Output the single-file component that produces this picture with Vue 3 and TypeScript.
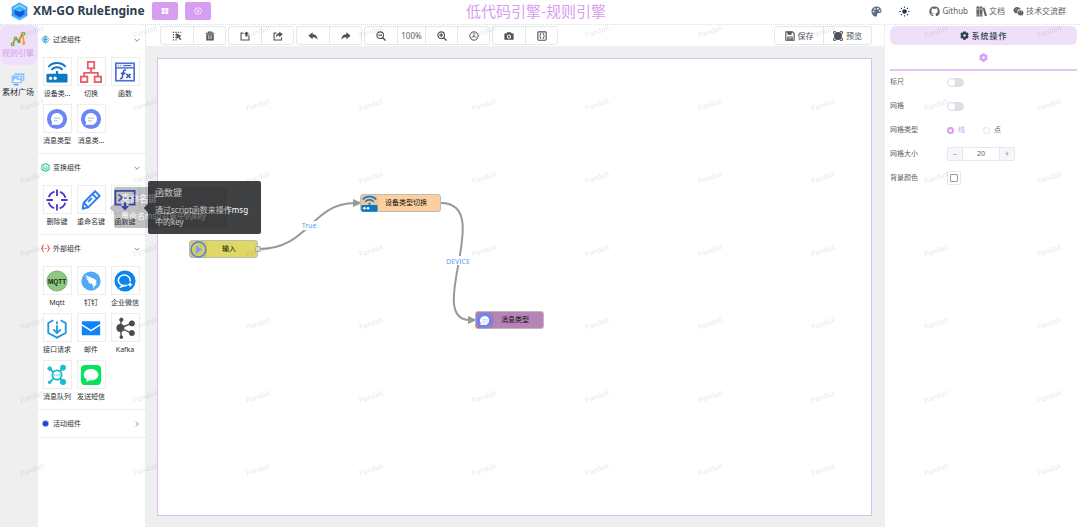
<script setup lang="ts">
import { ref } from 'vue'

interface Tile { label: string; icon: string }
interface Group { title: string; icon: string; open: boolean; tiles: Tile[] }
interface FlowNode { id: string; label: string; icon: string }

const chat = '<circle cx="12" cy="12" r="11" fill="#6a87f5"/><path d="M12 5.500a6.500 6.500 0 1 1-1 12.900H5.800l1-2.600A6.500 6.500 0 0 1 12 5.500z" fill="#fff"/><path d="M8.500 11h7M8.500 14h4.500" stroke="#b9c7fb" stroke-width="1.300"/>'
const router = '<rect x="0.500" y="14" width="23" height="9.500" rx="1.500" fill="#0d78c4"/><path d="M12 11v4" stroke="#0d78c4" stroke-width="2.400"/><g fill="none" stroke="#0d78c4" stroke-width="2"><path d="M2.500 6.500C7 .8 17 .8 21.500 6.500"/><path d="M6 9.800c3-4 9-4 12 0"/></g><circle cx="5" cy="18.800" r="1.800" fill="#fff"/><circle cx="10" cy="18.800" r="1.800" fill="#fff"/>'

const icons: Record<string, string> = {
  logo: '<path d="M12 .5l10 5.700v11.600L12 23.500 2 17.800V6.200z" fill="#3d9dfb"/><path d="M12 2.500l8 4.700v3L12 6 4 10.200v-3z" fill="#7fd4ff"/><path d="M12 7l6 3v5.500L12 19l-6-3.500V10z" fill="#1a56d6"/><path d="M12 7l6 3-6 2.700L6 10z" fill="#2ac6f5"/><path d="M1 11v2.500M23 11v2.500" stroke="#fff" stroke-width="2.500"/><path d="M4 17l8 4 8-4v1.500l-8 4.500-8-4.500z" fill="#5cc9ff"/>',
  grid: '<path d="M2 3h9v8H2zM13 3h9v8h-9zM2 13h9v8H2zM13 13h9v8h-9z" fill="currentColor"/>',
  hexcog: '<path d="M12 1.500l3 2.500 4.500-.2 1 4.400L23.500 12l-3 3.800-1 4.400L15 20l-3 2.500L9 20l-4.500.2-1-4.400L.5 12l3-3.800 1-4.400L9 4z" fill="none" stroke="currentColor" stroke-width="2"/><circle cx="12" cy="12" r="3.500" fill="none" stroke="currentColor" stroke-width="2"/>',
  cog: '<path fill-rule="evenodd" d="M8.500 1h7l.8 3 1.500.900 3.200-.9 2 5.500-2 1.500v2l2 1.500-2 5.500-3.200-.9-1.500.9-.8 3h-7l-.8-3-1.500-.9-3.200.9-2-5.500 2-1.500v-2L1 9.500 3 4l3.200.9L7.700 4zM12 8.500a3.500 3.500 0 1 0 0 7 3.500 3.500 0 0 0 0-7z" fill="currentColor"/>',
  palette: '<path fill-rule="evenodd" d="M12 1C6 1 1 5.700 1 12c0 6 4.500 11 9.800 11 4.400 0 1.200-4.500 3.200-6.500 2-2 9 1 9-5.500C23 5 18 1 12 1zM5.500 10a1.900 1.900 0 1 1 .1 3.900 1.900 1.900 0 0 1 0-3.900zM8.500 4.800a1.900 1.900 0 1 1 0 3.900 1.900 1.900 0 0 1 0-3.900zM15 4a1.900 1.900 0 1 1 0 3.900A1.900 1.900 0 0 1 15 4zM19 8.500a1.900 1.900 0 1 1 0 3.900 1.900 1.900 0 0 1 0-3.900z" fill="currentColor"/>',
  sun: '<circle cx="12" cy="12" r="5" fill="currentColor"/><path d="M12 1v3M12 20v3M1 12h3M20 12h3M4.200 4.200l2.200 2.200M17.600 17.600l2.200 2.200M4.200 19.800l2.200-2.200M17.600 6.400l2.200-2.200" stroke="currentColor" stroke-width="2.500"/>',
  github: '<path d="M12 1a11 11 0 0 0-3.500 21.500c.6.100.8-.3.800-.6v-2.300c-3.100.7-3.700-1.300-3.700-1.300-.5-1.300-1.200-1.600-1.200-1.600-1-.7.100-.7.100-.7 1.100.100 1.700 1.100 1.700 1.100 1 1.700 2.600 1.200 3.200.9.100-.7.400-1.200.7-1.500-2.500-.3-5-1.200-5-5.400 0-1.200.4-2.200 1.100-3-.1-.3-.5-1.400.1-3 0 0 .9-.3 3 1.100a10.500 10.500 0 0 1 5.500 0c2.100-1.400 3-1.100 3-1.100.6 1.600.2 2.700.1 3 .7.800 1.100 1.800 1.100 3 0 4.200-2.600 5.100-5 5.400.4.300.8 1 .8 2v3.400c0 .3.200.7.800.6A11 11 0 0 0 12 1z" fill="currentColor"/>',
  books: '<path fill-rule="evenodd" d="M1 1h6v22H1zM3 5v3h2V5zM3 18v2h2v-2zM8 1h6v22H8zM10 5v3h2V5zM10 18v2h2v-2zM14.500 4.500l4-1.500 5.500 18-4.500 1.500z" fill="currentColor"/>',
  wechat: '<path d="M9 2C4.500 2 1 5 1 8.800c0 2.200 1.100 4 3 5.200l-.8 2.500L6 15c1 .3 2 .5 3 .5-1-5 3-8.500 8-8.300C16.200 4.200 13 2 9 2z" fill="currentColor"/><path d="M16.500 9c-3.900 0-7 2.600-7 5.800s3.100 5.700 7 5.700c.8 0 1.600-.1 2.300-.3l2.400 1.300-.7-2.200c1.600-1 2.500-2.700 2.500-4.500C23 11.600 20.400 9 16.500 9z" fill="currentColor"/><path d="M6 7h1.500M11 7h1.500M13.500 13H15M18 13h1.500" stroke="#fff" stroke-width="1.600"/>',
  route: '<path d="M4 20l4-9 5 4 6-11" fill="none" stroke="#e8a13c" stroke-width="3"/><path d="M4 20l4-9 5 4 6-11" fill="none" stroke="#d9534a" stroke-width="1"/><g fill="#5fae58"><circle cx="4" cy="20" r="3"/><circle cx="8.500" cy="11" r="2.800"/><circle cx="13.500" cy="15.500" r="2.800"/><circle cx="20" cy="4" r="3"/></g><path d="M19 5l2 13" stroke="#e8a13c" stroke-width="2.500"/><circle cx="20.500" cy="18.500" r="2.500" fill="#e8a13c"/><g fill="#f9e26b"><circle cx="4" cy="20" r="1.200"/><circle cx="20" cy="4" r="1.200"/><circle cx="8.500" cy="11" r="1"/></g>',
  gallery: '<path d="M6 2h17v14h-3V5H6z" fill="#8fc6fb"/><path d="M1 6h18v13H1z" fill="#8fc6fb"/><path d="M3 17l5-6 4 4 2-2 3 4z" fill="#fff"/><circle cx="14.500" cy="9.500" r="1.600" fill="#fff"/><path d="M3 20l3 3h8l-2-3z" fill="#5ea6ee"/>',
  filter: '<path d="M9 3L2 12l7 9z" fill="none" stroke="#3b8ff0" stroke-width="2.200"/><path d="M12 1v22" stroke="#3b8ff0" stroke-width="1.800"/><path d="M15 3l7 9-7 9z" fill="none" stroke="#49cda0" stroke-width="2.200"/><path d="M6 12h12" stroke="#3b8ff0" stroke-width="2.200"/>',
  transform: '<path d="M12 1.500l9.500 5v11l-9.500 5-9.500-5v-11z" fill="none" stroke="#27c99a" stroke-width="2.800"/><path d="M8 7v10M8 14h3v3M13 10h3v7h-3" fill="none" stroke="#27c99a" stroke-width="2.200"/>',
  braces: '<path d="M7 3C3.500 3 5.500 10 1.500 12c4 2 2 9 5.500 9M17 3c3.500 0 1.500 7 5.500 9-4 2-2 9-5.500 9" fill="none" stroke="#f0524f" stroke-width="2.700"/><path d="M7.500 12h2M11 12h2M14.500 12h2" stroke="#f0524f" stroke-width="2.500"/>',
  activity: '<circle cx="12" cy="12" r="9.500" fill="#a9bdf5"/><circle cx="12" cy="12" r="7" fill="#2141cf"/>',
  router,
  chat,
  tree: '<g fill="none" stroke="#e8606a" stroke-width="2"><rect x="8.500" y="1" width="7" height="7"/><rect x="1" y="17" width="7" height="6"/><rect x="16" y="17" width="7" height="6"/><path d="M12 8v5M4.500 17v-4h15v4"/></g>',
  fx: '<rect x="2" y="2.500" width="20" height="19" fill="none" stroke="#4a6fd8" stroke-width="1.800"/><path d="M2 7.500h20" stroke="#4a6fd8" stroke-width="1.600"/><path d="M4.500 5h1M7 5h1M10 5h9" stroke="#4a6fd8" stroke-width="1.500"/><path d="M13 10c-2.500-.6-2.700 1-3 3l-.8 4c-.3 1.800-1 2.500-2.700 2M7.500 13.500h5M13.500 14l4.500 4.500M18 14l-4.500 4.500" fill="none" stroke="#3455c8" stroke-width="1.700"/>',
  target: '<circle cx="12" cy="12" r="9.500" fill="none" stroke="#4b37c9" stroke-width="2" stroke-dasharray="8.920 6" stroke-dashoffset="-3"/><path d="M12 .5v7M12 16.500v7M.5 12h7M16.500 12h7" stroke="#4b37c9" stroke-width="2"/>',
  pencil: '<g fill="none" stroke="#2f7df0" stroke-width="2.100" stroke-linejoin="round"><path d="M16.500 2.500l5 5L9 20l-6 1.500L4 15z"/><path d="M13.500 5.500l5 5M4 15l5 5M9 14l4-4"/></g>',
  script: '<path d="M8 17H1.500V2h21v15H16" fill="none" stroke="#3d52d5" stroke-width="2"/><path d="M5 6l4 3.500L5 13M11 10h3M16 10h3" fill="none" stroke="#3d52d5" stroke-width="1.800"/><path d="M12 14v6" stroke="#3d52d5" stroke-width="2.500"/><path d="M7.500 18.500h9L12 23.500z" fill="#3d52d5"/>',
  mqtt: '<circle cx="12" cy="12" r="11" fill="#8cc97e" stroke="#6a9a60" stroke-width=".8"/><text x="12" y="15" text-anchor="middle" font-family="Liberation Sans, sans-serif" font-weight="700" font-size="7" fill="#1b2b1a">MQTT</text>',
  ding: '<circle cx="12" cy="12" r="10.500" fill="#52a8f7"/><path d="M6 5.500c3 2 8 3 11.500 5.500 1 .8.300 2-.7 3.500h2l-5 6 1-4h-2l.8-1.800c-2.800.3-4.600-.7-5-2.200l2 .2C8 11.500 7 10 6.800 8.500l3 1.500C7.500 8.500 6.200 7 6 5.500z" fill="#fff"/>',
  wecom: '<circle cx="12" cy="12" r="11.500" fill="#0a84ee"/><path d="M17.500 12.500a6.500 5.700 0 1 0-8.500 4l-1.500 2 4-1.500c1 .1 2 0 3-.4" fill="none" stroke="#fff" stroke-width="1.700"/><path d="M17.500 13l1 2 2 1-2 1-1 2-1-2-2-1 2-1z" fill="#fff"/>',
  api: '<path d="M8 3.500L2.500 6.500v11L12 22.500l9.500-5v-11L16 3.500" fill="none" stroke="#2496dc" stroke-width="2"/><path d="M12 5v3M12 9v8M8 13.500l4 4 4-4" fill="none" stroke="#2496dc" stroke-width="2"/>',
  mail: '<path d="M2 4.500h20v3L12 14 2 7.500z" fill="#0d84fb"/><path d="M2 9.500l10 6.300 10-6.300v10.500H2z" fill="#0d84fb"/>',
  kafka: '<g fill="#4b4b4d" stroke="#4b4b4d"><path d="M7 12L8 3M7 12l1 10M7 12l12-5M7 12l12 5.500" stroke-width="1.500"/><circle cx="7" cy="12" r="4"/><circle cx="8" cy="3" r="1.900"/><circle cx="8" cy="22" r="1.500"/><circle cx="19.500" cy="7" r="2.800"/><circle cx="19.500" cy="17.500" r="2.800"/></g>',
  queue: '<g fill="#1cbcd2" stroke="#1cbcd2"><path d="M4 5l4 4M18 4l-3 5M4 20l4-4M15 15l3 4" stroke-width="2"/><circle cx="12" cy="12" r="5" fill="#fff" stroke-width="2"/><circle cx="4" cy="5" r="2"/><circle cx="18.500" cy="4" r="2.800"/><circle cx="4" cy="20" r="1.500"/><circle cx="18.500" cy="19.500" r="3"/><path d="M9 12h1M11.500 12h1M14 12h1" stroke-width="1.500"/></g>',
  sms: '<rect x="1" y="1" width="22" height="22" rx="4.500" fill="#06e25b"/><path d="M12 5.500c-4.400 0-8 2.700-8 6.200 0 2.200 1.400 4 3.500 5.200L7 19.500l3.200-1.800c.6.100 1.200.2 1.800.2 4.400 0 8-2.700 8-6.200s-3.600-6.200-8-6.200z" fill="#fff"/>',
  play: '<circle cx="12" cy="12" r="10.500" fill="none" stroke="#4f7fe6" stroke-width="2"/><path d="M8.500 6v12l8.500-6z" fill="#7aa2ee"/>',
  select: '<path d="M2 3h3M8 3h3M14 3h3M20 3h2M2 9h3M2 15h3M2 21h3M8 21h3M8 9h3M8 15h3M20 20h2" stroke="currentColor" stroke-width="3"/><path d="M10 5l13 7-5 1.500 4 6-3 2-4-6-4 4z" fill="currentColor"/>',
  trash: '<path d="M1.500 5.500h21M8 5V2.500h8V5" fill="none" stroke="currentColor" stroke-width="2.500"/><path fill-rule="evenodd" d="M3 7.500h18V23H3zM7 10v10h1.500V10zM11.200 10v10h1.600V10zM15.500 10v10H17V10z" fill="currentColor"/>',
  importer: '<path d="M8 5H2.500v16.500h19V10" fill="none" stroke="currentColor" stroke-width="2.600"/><path d="M18 13h-5V8H9l6.500-7L22 8h-4z" fill="currentColor"/>',
  exporter: '<path d="M8 5H2.500v16.500h18V15" fill="none" stroke="currentColor" stroke-width="2.600"/><path d="M15 1l8.500 7L15 15v-4c-4 0-6 1-8.500 5 0-6 3.500-10 8.500-11z" fill="currentColor"/>',
  undo: '<path d="M11 3L1 11.500 11 20v-5c5 0 9 1 12 6 0-8-5-13-12-13z" fill="currentColor"/>',
  redo: '<path d="M13 3l10 8.500L13 20v-5c-5 0-9 1-12 6C1 13 6 8 13 8z" fill="currentColor"/>',
  zoomOut: '<circle cx="10" cy="10" r="8" fill="none" stroke="currentColor" stroke-width="2.600"/><path d="M5.500 10h9M15.500 15.500L23 23" stroke="currentColor" stroke-width="3.200"/>',
  zoomIn: '<circle cx="10" cy="10" r="8" fill="none" stroke="currentColor" stroke-width="2.600"/><path d="M5.500 10h9M10 5.500v9M15.500 15.500L23 23" stroke="currentColor" stroke-width="3"/>',
  reset: '<circle cx="12" cy="12" r="10" fill="none" stroke="currentColor" stroke-width="2.400"/><path d="M12 5v8M12 12.500l-6 3M12 12.500l6 3" stroke="currentColor" stroke-width="2"/>',
  camera: '<path fill-rule="evenodd" d="M7.500 3h9l1.500 3h5v15H1V6h5zM12 8.500a5 5 0 1 0 0 10 5 5 0 0 0 0-10zM12 11a2.500 2.500 0 1 1 0 5 2.500 2.500 0 0 1 0-5z" fill="currentColor"/>',
  code: '<rect x="2" y="2" width="20" height="20" rx="2" fill="none" stroke="currentColor" stroke-width="2.600"/><path d="M10.500 6.500H8v4L6 12l2 1.500v4h2.500M13.500 6.500H16v4l2 1.500-2 1.500v4h-2.500" fill="none" stroke="currentColor" stroke-width="2.200"/>',
  save: '<path d="M2 2h16l4 4v16H2z" fill="none" stroke="currentColor" stroke-width="2.600"/><path d="M6 2h10v7H6zM5.500 13h13v9h-13z" fill="currentColor"/><path d="M8 16h8M8 19h8" stroke="#fff" stroke-width="1.500"/>',
  preview: '<path d="M1.500 7V1.500H7M17 1.500h5.500V7M22.500 17v5.500H17M7 22.500H1.500V17" fill="none" stroke="currentColor" stroke-width="2.400"/><path d="M4 4h16v16H4z" fill="currentColor" opacity=".7"/><circle cx="12" cy="12" r="9.500" fill="currentColor"/>',
}

const groups = ref<Group[]>([
  { title: '过滤组件', icon: 'filter', open: true, tiles: [
    { label: '设备类型切换', icon: 'router' }, { label: '切换', icon: 'tree' }, { label: '函数', icon: 'fx' },
    { label: '消息类型', icon: 'chat' }, { label: '消息类型切换', icon: 'chat' },
  ] },
  { title: '变换组件', icon: 'transform', open: true, tiles: [
    { label: '删除键', icon: 'target' }, { label: '重命名键', icon: 'pencil' }, { label: '函数键', icon: 'script' },
  ] },
  { title: '外部组件', icon: 'braces', open: true, tiles: [
    { label: 'Mqtt', icon: 'mqtt' }, { label: '钉钉', icon: 'ding' }, { label: '企业微信', icon: 'wecom' },
    { label: '接口请求', icon: 'api' }, { label: '邮件', icon: 'mail' }, { label: 'Kafka', icon: 'kafka' },
    { label: '消息队列', icon: 'queue' }, { label: '发送短信', icon: 'sms' },
  ] },
  { title: '活动组件', icon: 'activity', open: false, tiles: [] },
])

const shorten = (s: string): string => (s.length > 5 ? s.slice(0, 3) + '...' : s)

const toolGroups = [
  [{ icon: 'select', name: '框选' }, { icon: 'trash', name: '删除' }],
  [{ icon: 'importer', name: '导入' }, { icon: 'exporter', name: '导出' }],
  [{ icon: 'undo', name: '撤销' }, { icon: 'redo', name: '重做' }],
  [{ icon: 'zoomOut', name: '缩小' }, { icon: '', name: '100%' }, { icon: 'zoomIn', name: '放大' }, { icon: 'reset', name: '还原' }],
  [{ icon: 'camera', name: '截图' }, { icon: 'code', name: '源码' }],
]

const nodes: FlowNode[] = [
  { id: 'start', label: '输入', icon: 'play' },
  { id: 'device', label: '设备类型切换', icon: 'router' },
  { id: 'message', label: '消息类型', icon: 'chat' },
]

const ruler = ref(false)
const gridOn = ref(false)
const gridType = ref('line')
const gridSize = ref(20)
const background = ref('#ffffff')
</script>

<template>
  <div class="app">
    <header class="top">
      <div class="brand">
        <svg class="logo" viewBox="0 0 24 24" v-html="icons.logo"></svg>
        <strong class="name">XM-GO RuleEngine</strong>
        <button class="chip" aria-label="菜单"><svg class="i8" viewBox="0 0 24 24" v-html="icons.grid"></svg></button>
        <button class="chip" aria-label="设置"><svg class="i8" viewBox="0 0 24 24" v-html="icons.hexcog"></svg></button>
      </div>
      <h1 class="title">低代码引擎-规则引擎</h1>
      <nav class="links">
        <button class="slate" aria-label="主题"><svg class="i11" viewBox="0 0 24 24" v-html="icons.palette"></svg></button>
        <button class="dark" aria-label="明暗"><svg class="i11" viewBox="0 0 24 24" v-html="icons.sun"></svg></button>
        <a href="#github"><svg class="i11" viewBox="0 0 24 24" v-html="icons.github"></svg>Github</a>
        <a href="#docs"><svg class="i11" viewBox="0 0 24 24" v-html="icons.books"></svg>文档</a>
        <a href="#group"><svg class="i11" viewBox="0 0 24 24" v-html="icons.wechat"></svg>技术交流群</a>
      </nav>
    </header>

    <div class="body">
      <nav class="rail">
        <a class="rail-item active" href="#rules"><svg class="i16" viewBox="0 0 24 24" v-html="icons.route"></svg>规则引擎</a>
        <a class="rail-item" href="#assets"><svg class="i14" viewBox="0 0 24 24" v-html="icons.gallery"></svg>素材广场</a>
      </nav>

      <aside class="palette">
        <section v-for="g in groups" :key="g.title" class="group">
          <button class="group-head" :aria-expanded="g.open" @click="g.open = !g.open">
            <svg class="i9" viewBox="0 0 24 24" v-html="icons[g.icon]"></svg>
            <span>{{ g.title }}</span>
            <svg class="chev" :class="{ closed: !g.open }" viewBox="0 0 12 12"><path d="M1 3.500l5 5 5-5" /></svg>
          </button>
          <div v-if="g.open && g.tiles.length" class="tiles">
            <div v-for="t in g.tiles" :key="t.label" class="tile">
              <div class="box"><svg class="i22" viewBox="0 0 24 24" v-html="icons[t.icon]"></svg></div>
              <span>{{ shorten(t.label) }}</span>
            </div>
          </div>
        </section>
      </aside>

      <main class="work">
        <div class="toolbar">
          <div v-for="(tg, i) in toolGroups" :key="i" class="bgroup">
            <button v-for="b in tg" :key="b.name" class="tool" :class="{ zoom: !b.icon }" :aria-label="b.name">
              <svg v-if="b.icon" class="i10" viewBox="0 0 24 24" v-html="icons[b.icon]"></svg>
              <template v-else>{{ b.name }}</template>
            </button>
          </div>
          <div class="bgroup end">
            <button class="tool wide"><svg class="i10" viewBox="0 0 24 24" v-html="icons.save"></svg>保存</button>
            <button class="tool wide"><svg class="i10" viewBox="0 0 24 24" v-html="icons.preview"></svg>预览</button>
          </div>
        </div>
        <div class="stage">
          <div class="canvas">
            <svg class="edges">
              <path class="edge" d="M101 190C151 190 153 144 197 144" />
              <path class="edge" d="M283 144C338 144 266 261 312 261" />
              <path class="arrow" d="M195 140l9 4-9 4zM310 257l9 4-9 4z" />
              <rect class="gap" x="143" y="162" width="18" height="9" />
              <rect class="gap" x="287" y="197" width="26" height="9" />
              <text x="151" y="169">True</text>
              <text x="300" y="205">DEVICE</text>
            </svg>
            <div v-for="n in nodes" :key="n.id" class="node" :class="n.id">
              <svg class="node-icon" viewBox="0 0 24 24" v-html="icons[n.icon]"></svg>
              <span>{{ n.label }}</span>
              <i v-if="n.id === 'start'" class="port"></i>
            </div>
          </div>
        </div>
      </main>

      <aside class="props">
        <h2 class="props-head"><svg class="i9" viewBox="0 0 24 24" v-html="icons.cog"></svg>系统操作</h2>
        <button class="tab" aria-label="画布设置"><svg class="i9" viewBox="0 0 24 24" v-html="icons.cog"></svg></button>
        <form class="form" @submit.prevent>
          <div class="row"><label for="ruler">标尺</label><input id="ruler" v-model="ruler" class="switch" type="checkbox" /></div>
          <div class="row"><label for="grid">网格</label><input id="grid" v-model="gridOn" class="switch" type="checkbox" /></div>
          <div class="row" role="radiogroup" aria-labelledby="gtype">
            <span id="gtype" class="cap">网格类型</span>
            <label class="radio"><input v-model="gridType" type="radio" value="line" /><span>线</span></label>
            <label class="radio"><input v-model="gridType" type="radio" value="dot" /><span>点</span></label>
          </div>
          <div class="row">
            <label for="size">网格大小</label>
            <div class="number">
              <button type="button" aria-label="减少" @click="gridSize--">−</button>
              <input id="size" v-model.number="gridSize" type="text" />
              <button type="button" aria-label="增加" @click="gridSize++">+</button>
            </div>
          </div>
          <div class="row"><label for="bg">背景颜色</label><input id="bg" v-model="background" class="color" type="color" /></div>
        </form>
      </aside>
    </div>

    <div class="tip main-tip" role="tooltip"><b>函数键</b><p>通过script函数来操作msg中的key</p></div>
    <div class="tip fading" role="tooltip"><b>重命名键</b><p>重命名msg对象中的key</p></div>

    <svg class="watermark" aria-hidden="true">
      <defs>
        <pattern id="wm" x="-24" y="-5" width="113" height="73" patternUnits="userSpaceOnUse">
          <text x="56" y="39" text-anchor="middle" transform="rotate(-18 56 36)">PandaX</text>
        </pattern>
      </defs>
      <rect width="100%" height="100%" fill="url(#wm)" />
    </svg>
  </div>
</template>

<style>
body { margin: 0; }
</style>

<style scoped>
.app {
  position: relative;
  display: flex;
  flex-direction: column;
  min-height: 100vh;
  overflow: hidden;
  background: #fff;
  color: #606266;
  font-family: "Noto Sans", "Noto Sans CJK SC", sans-serif;
  font-size: 8px;
  line-height: 12px;
}
.app *, .app *::before { box-sizing: border-box; }
button { font: inherit; color: inherit; padding: 0; margin: 0; border: 0; background: none; cursor: pointer; }
a { color: inherit; text-decoration: none; }
svg { display: block; flex: none; }
.i8 { width: 8px; height: 8px; }
.i9 { width: 9px; height: 9px; }
.i10 { width: 10px; height: 10px; }
.i11 { width: 11px; height: 11px; }
.i14 { width: 14px; height: 14px; }
.i16 { width: 16px; height: 16px; }
.i22 { width: 22px; height: 22px; }

.top {
  display: grid;
  grid-template-columns: 1fr auto 1fr;
  align-items: center;
  height: 25px;
  padding: 0 14px 2px 6px;
  border-bottom: 1px dotted #dcdfe6;
}
.brand { display: flex; align-items: center; padding-left: 4px; }
.logo { width: 19px; height: 19px; margin-right: 4px; }
.name { width: 119px; color: #2c3e50; font-size: 12px; line-height: 18px; white-space: nowrap; }
.chip { display: flex; align-items: center; justify-content: center; width: 26px; height: 18px; margin-right: 7px; border-radius: 2px; background: #d69df0; color: #fff; }
.title { margin: 0; color: #d69df0; font-size: 15px; font-weight: 400; line-height: 22px; }
.links { display: flex; align-items: center; justify-content: flex-end; gap: 8px; }
.links a { display: flex; align-items: center; gap: 2px; }
.links .slate { margin-right: 9px; color: #5d6d85; }
.links .dark { margin-right: 11px; color: #22344a; }

.body { display: flex; flex: 1; }
.rail { width: 38px; background: #efefef; }
.rail-item { display: flex; flex-direction: column; align-items: center; justify-content: center; height: 40px; padding-right: 2px; color: #303133; white-space: nowrap; }
.rail-item.active { border-radius: 8px; background: #f0dff9; color: #d69df0; }

.palette { width: 108px; padding-top: 1px; border-right: 1px dotted #dcdfe6; font-size: 7px; }
.group { border-bottom: 1px solid #ebeef5; }
.group-head { display: flex; align-items: center; gap: 3px; width: 100%; height: 27px; padding: 0 5px 0 3px; color: #303133; text-align: left; }
.group-head span { flex: 1; }
.chev { width: 6px; height: 6px; fill: none; stroke: #606266; stroke-width: 1.5; }
.chev.closed { transform: rotate(-90deg); }
.tiles { display: grid; grid-template-columns: repeat(3, 34px); padding: 4px 0 2px 2px; }
.tile { display: flex; flex-direction: column; align-items: center; height: 47px; color: #303133; white-space: nowrap; }
.box { display: flex; align-items: center; justify-content: center; width: 29px; height: 29px; margin-bottom: 2px; border: 1px solid #ededed; }

.work { display: flex; flex: 1; flex-direction: column; min-width: 0; }
.toolbar { display: flex; align-items: center; gap: 2px; height: 21px; padding: 0 12px 0 14px; }
.bgroup { display: flex; height: 19px; border: 1px solid #e4e7ed; border-radius: 3px; }
.bgroup.end { margin-left: auto; }
.tool { display: flex; align-items: center; justify-content: center; gap: 3px; width: 32px; color: #4e5157; }
.tool + .tool { border-left: 1px solid #e4e7ed; }
.tool.zoom { width: 28px; color: #606266; }
.tool.wide { width: 48px; }
.stage { display: flex; flex: 1; padding: 12px 12px 11px 11px; background: #efefef; }
.canvas { position: relative; flex: 1; border: 1px solid #dfbdf0; background: #fff; }
.edges { position: absolute; inset: 0; width: 100%; height: 100%; }
.edge { fill: none; stroke: #999; stroke-width: 2; }
.arrow { fill: #999; }
.gap { fill: #fff; }
.edges text { fill: #5aa2f5; font-size: 7px; text-anchor: middle; }
.node { position: absolute; display: flex; align-items: center; width: 69px; height: 18px; border: 1px solid #bbb; border-radius: 3px; color: #111; font-size: 7px; }
.node span { flex: 1; text-align: center; padding-right: 6px; }
.node-icon { width: 17px; height: 17px; border-radius: 2px; background: rgba(0, 0, 0, 0.05); }
.node.start { left: 31px; top: 181px; background: #dfd766; }
.node.device { left: 202px; top: 135px; width: 81px; background: #fdcf9e; }
.node.message { left: 317px; top: 252px; background: #b784b7; }
.port { position: absolute; right: -4px; top: 5px; width: 6px; height: 6px; border: 1px solid #aaa; border-radius: 2px; background: #ddd; }

.props { width: 196px; padding: 1px 3px 0 5px; border-left: 1px dotted #dcdfe6; font-size: 7px; }
.props-head { display: flex; align-items: center; justify-content: center; gap: 3px; height: 19px; margin: 0; border-radius: 6px; background: #f0dff9; color: #2c3e50; font-size: 8px; font-weight: 500; letter-spacing: 1px; }
.tab { display: flex; align-items: center; justify-content: center; width: 100%; height: 26px; border-bottom: 2px solid #e5c5f5; color: #d69df0; }
.form { display: flex; flex-direction: column; gap: 4px; padding-top: 1px; }
.row { display: flex; align-items: center; height: 20px; }
.row > label:first-child, .cap { width: 57px; }
.switch { appearance: none; width: 17px; height: 9px; margin: 0; padding: 1px; border-radius: 5px; background: #dcdfe6; }
.switch::before { content: ""; display: block; width: 7px; height: 7px; border-radius: 50%; background: #fff; }
.switch:checked { background: #d69df0; }
.switch:checked::before { margin-left: 8px; }
.radio { display: flex; align-items: center; gap: 4px; width: 36px; }
.radio input { appearance: none; width: 7px; height: 7px; margin: 0; border: 1px solid #dcdfe6; border-radius: 50%; }
.radio input:checked { border: 2px solid #d69df0; }
.radio input:checked + span { color: #d69df0; }
.number { display: flex; width: 68px; height: 14px; border: 1px solid #e4e7ed; border-radius: 2px; }
.number button { width: 14px; background: #f5f7fa; color: #909399; font-size: 8px; line-height: 12px; }
.number input { flex: 1; min-width: 0; padding: 0; border: 0; border-left: 1px solid #e4e7ed; border-right: 1px solid #e4e7ed; font: inherit; color: #606266; text-align: center; }
.color { appearance: none; width: 14px; height: 14px; margin: 0; padding: 2px; border: 1px solid #e4e7ed; border-radius: 2px; background: #fff; }
.color::-webkit-color-swatch-wrapper { padding: 0; }
.color::-webkit-color-swatch { border: 1px solid #999; border-radius: 1px; }

.tip { position: absolute; width: 113px; padding: 5px 7px; border-radius: 2px; background: #303133; color: #fff; }
.tip::before { content: ""; position: absolute; left: -3px; top: 50%; width: 6px; height: 6px; margin-top: -3px; background: inherit; transform: rotate(45deg); }
.tip b { display: block; font-size: 9px; font-weight: 400; line-height: 14px; }
.tip p { margin: 4px 0 0; line-height: 12px; }
.main-tip { left: 148px; top: 181px; height: 53px; opacity: 0.92; }
.fading { left: 114px; top: 187px; height: 41px; opacity: 0.3; }

.watermark { position: absolute; inset: 0; width: 100%; height: 100%; pointer-events: none; }
.watermark text { fill: #000; fill-opacity: 0.1; font-size: 7px; }
</style>
